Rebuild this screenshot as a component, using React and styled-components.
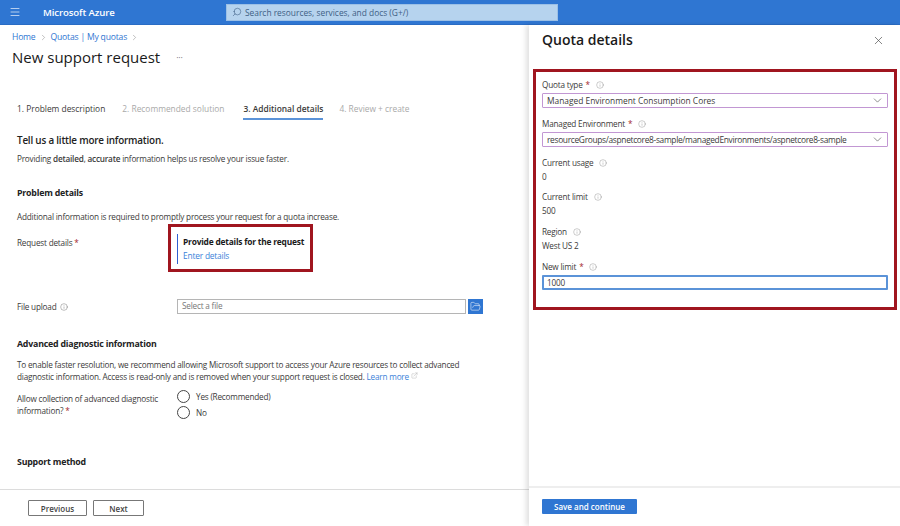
import React from "react";
import styled, { createGlobalStyle } from "styled-components";
import { ChevronDown, ChevronRight, Info, Menu, Search, X, ExternalLink, FolderOpen } from "lucide-react";

const GlobalStyle = createGlobalStyle`
    html, body {
        margin: 0;
        padding: 0;
        background: #fff;
    }
    body {
        font-family: "Open Sans", "Noto Sans", "Liberation Sans", sans-serif;
        font-size: 8.2px;
        letter-spacing: -0.2px;
        color: #3b3a39;
    }
`;

const App = () => {
    return (
        <>
            <GlobalStyle />
            <Page>
                <TopBar>
                    <MenuButton>
                        <Menu size={12} strokeWidth={1.3} />
                    </MenuButton>
                    <Brand>Microsoft Azure</Brand>
                    <SearchBox>
                        <Search size={10} strokeWidth={1.4} style={{ transform: "scaleX(-1)" }} />
                        <span>Search resources, services, and docs (G+/)</span>
                    </SearchBox>
                </TopBar>
                <Body>
                    <Main>
                        <Scroll>
                            <Breadcrumb>
                                <Crumb>Home</Crumb>
                                <ChevronRight size={9} strokeWidth={1.2} />
                                <Crumb>Quotas | My quotas</Crumb>
                                <ChevronRight size={9} strokeWidth={1.2} />
                            </Breadcrumb>
                            <TitleRow>
                                <Title>New support request</Title>
                                <Dots>···</Dots>
                            </TitleRow>
                            <Tabs>
                                <Tab>1. Problem description</Tab>
                                <Tab $muted>2. Recommended solution</Tab>
                                <Tab $active>3. Additional details</Tab>
                                <Tab $muted>4. Review + create</Tab>
                            </Tabs>
                            <Lead>Tell us a little more information.</Lead>
                            <LeadText>
                                Providing <b>detailed</b>, <b>accurate</b> information helps us resolve your issue faster.
                            </LeadText>
                            <SectionHead $top={22}>Problem details</SectionHead>
                            <Paragraph $top={12}>
                                Additional information is required to promptly process your request for a quota increase.
                            </Paragraph>
                            <RequestRow>
                                <RowLabel $w={151} $pad={13}>
                                    Request details <Star>*</Star>
                                </RowLabel>
                                <Highlight>
                                    <Callout>
                                        <CalloutTitle>Provide details for the request</CalloutTitle>
                                        <Link>Enter details</Link>
                                    </Callout>
                                </Highlight>
                            </RequestRow>
                            <FileRow>
                                <RowLabel>
                                    <LabelLine>
                                        File upload <Info size={8} strokeWidth={1} />
                                    </LabelLine>
                                </RowLabel>
                                <FileInput>Select a file</FileInput>
                                <FileButton>
                                    <FolderOpen size={11} strokeWidth={1.2} />
                                </FileButton>
                            </FileRow>
                            <SectionHead $top={24}>Advanced diagnostic information</SectionHead>
                            <Paragraph $top={9}>
                                To enable faster resolution, we recommend allowing Microsoft support to access your Azure resources to collect advanced
                                diagnostic information. Access is read-only and is removed when your support request is closed.{" "}
                                <Link>Learn more</Link> <ExternalLink size={7} strokeWidth={1} />
                            </Paragraph>
                            <RadioRow>
                                <RowLabel $pad={3}>
                                    Allow collection of advanced diagnostic information? <Star>*</Star>
                                </RowLabel>
                                <RadioGroup>
                                    <RadioOption>
                                        <Radio />
                                        Yes (Recommended)
                                    </RadioOption>
                                    <RadioOption>
                                        <Radio />
                                        No
                                    </RadioOption>
                                </RadioGroup>
                            </RadioRow>
                            <SectionHead $top={38}>Support method</SectionHead>
                        </Scroll>
                        <MainFooter>
                            <OutlineButton $w={59}>Previous</OutlineButton>
                            <OutlineButton $w={51}>Next</OutlineButton>
                        </MainFooter>
                    </Main>
                    <Panel>
                        <PanelHead>
                            <PanelTitle>Quota details</PanelTitle>
                            <X size={13} strokeWidth={1.2} color="#444" />
                        </PanelHead>
                        <PanelBox>
                            <Field>
                                <FieldLabel>
                                    Quota type <Star>*</Star> <Info size={8} strokeWidth={1} />
                                </FieldLabel>
                                <Select $spacing={0}>
                                    Managed Environment Consumption Cores
                                    <ChevronDown size={13} strokeWidth={1.1} />
                                </Select>
                            </Field>
                            <Field $top={10}>
                                <FieldLabel>
                                    Managed Environment <Star>*</Star> <Info size={8} strokeWidth={1} />
                                </FieldLabel>
                                <Select $spacing={-0.32}>
                                    resourceGroups/aspnetcore8-sample/managedEnvironments/aspnetcore8-sample
                                    <ChevronDown size={13} strokeWidth={1.1} />
                                </Select>
                            </Field>
                            <Field $top={10}>
                                <FieldLabel>
                                    Current usage <Info size={8} strokeWidth={1} />
                                </FieldLabel>
                                <Value>0</Value>
                            </Field>
                            <Field $top={8}>
                                <FieldLabel>
                                    Current limit <Info size={8} strokeWidth={1} />
                                </FieldLabel>
                                <Value>500</Value>
                            </Field>
                            <Field $top={9}>
                                <FieldLabel>
                                    Region <Info size={8} strokeWidth={1} />
                                </FieldLabel>
                                <Value>West US 2</Value>
                            </Field>
                            <Field $top={9}>
                                <FieldLabel>
                                    New limit <Star>*</Star> <Info size={8} strokeWidth={1} />
                                </FieldLabel>
                                <TextInput>1000</TextInput>
                            </Field>
                        </PanelBox>
                        <PanelSpacer />
                        <PanelFooter>
                            <PrimaryButton>Save and continue</PrimaryButton>
                        </PanelFooter>
                    </Panel>
                </Body>
            </Page>
        </>
    );
};

export default App;

const Page = styled.div`
    width: 900px;
    height: 526px;
    display: flex;
    flex-direction: column;
    overflow: hidden;
`;
const TopBar = styled.header`
    height: 25px;
    flex: none;
    box-sizing: border-box;
    background: #2f76d2;
    border-bottom: 1px solid #2a6cc4;
    display: flex;
    align-items: center;
    color: #fff;
`;
const MenuButton = styled.div`
    width: 29px;
    padding-left: 9px;
    box-sizing: border-box;
    display: flex;
`;
const Brand = styled.div`
    width: 189px;
    margin-left: 14px;
    font-size: 9.6px;
    font-weight: 600;
    letter-spacing: -0.1px;
`;
const SearchBox = styled.div`
    width: 332px;
    height: 17px;
    margin-left: -6px;
    box-sizing: border-box;
    padding-left: 5px;
    background: #b6d3ee;
    border: 1px solid #9cc0e6;
    color: #3e5f85;
    display: flex;
    align-items: center;
    gap: 3px;
    font-size: 8.4px;
    letter-spacing: 0;
`;
const Body = styled.div`
    flex: 1;
    display: flex;
    min-height: 0;
`;
const Main = styled.main`
    width: 529px;
    flex: none;
    display: flex;
    flex-direction: column;
`;
const Scroll = styled.div`
    flex: 1;
    padding-left: 17px;
    padding-right: 40px;
    overflow: hidden;
`;
const Breadcrumb = styled.nav`
    margin-left: -5px;
    height: 12px;
    margin-top: 6px;
    display: flex;
    align-items: center;
    gap: 3px;
    color: #777;
`;
const Crumb = styled.span`
    color: #2f76d2;
    font-size: 8.6px;
`;
const TitleRow = styled.div`
    margin-left: -5px;
    margin-top: 4px;
    display: flex;
    align-items: center;
    gap: 16px;
`;
const Title = styled.h1`
    margin: 0;
    font-size: 15px;
    line-height: 20px;
    font-weight: 500;
    letter-spacing: 0;
    color: #1a1a1a;
`;
const Dots = styled.span`
    color: #777;
    font-size: 9px;
`;
const Tabs = styled.div`
    margin-top: 33px;
    display: flex;
    gap: 17px;
`;
const Tab = styled.div`
    height: 20px;
    box-sizing: border-box;
    padding-top: 3px;
    margin: ${(props) => (props.$active ? "0 -1px 0 2px" : "0")};
    line-height: 12px;
    font-size: 8.4px;
    letter-spacing: 0;
    color: ${(props) => (props.$muted ? "#a9a9a9" : "#3b3a39")};
    font-weight: ${(props) => (props.$active ? 600 : 400)};
    border-bottom: 2px solid ${(props) => (props.$active ? "#5b93d8" : "transparent")};
`;
const Lead = styled.div`
    margin-top: 13px;
    font-size: 9.9px;
    line-height: 14px;
    font-weight: 600;
    color: #222;
`;
const LeadText = styled.div`
    margin-top: 6px;
    line-height: 12px;
    b {
        font-weight: 600;
    }
`;
const SectionHead = styled.h2`
    margin: ${(props) => props.$top}px 0 0;
    font-size: 8.8px;
    line-height: 12px;
    font-weight: 700;
    color: #222;
`;
const Paragraph = styled.p`
    margin: ${(props) => props.$top}px 0 0;
    line-height: 12px;
    svg {
        vertical-align: 1px;
        color: #888;
    }
`;
const RequestRow = styled.div`
    margin-top: 1px;
    display: flex;
    align-items: flex-start;
`;
const RowLabel = styled.div`
    width: ${(props) => props.$w || 160}px;
    flex: none;
    padding-top: ${(props) => props.$pad || 0}px;
    box-sizing: border-box;
    line-height: 12px;
`;
const LabelLine = styled.span`
    display: inline-flex;
    align-items: center;
    gap: 4px;
`;
const Star = styled.span`
    color: #a4262c;
`;
const Highlight = styled.div`
    width: 145px;
    height: 48px;
    box-sizing: border-box;
    border: 3px solid #a0151f;
    padding: 7px 6px;
`;
const Callout = styled.div`
    border-left: 1px solid #2f5fd0;
    padding: 1px 0 0 5px;
    height: 30px;
    box-sizing: border-box;
    line-height: 14px;
    font-size: 8.4px;
    white-space: nowrap;
`;
const CalloutTitle = styled.div`
    font-weight: 700;
    color: #1a1a1a;
`;
const Link = styled.a`
    color: #3b82d9;
`;
const FileRow = styled.div`
    margin-top: 27px;
    display: flex;
    align-items: center;
`;
const FileInput = styled.div`
    width: 289px;
    height: 15px;
    flex: none;
    box-sizing: border-box;
    border: 1px solid #b5b5b5;
    padding-left: 4px;
    line-height: 12px;
    color: #777;
`;
const FileButton = styled.div`
    width: 15px;
    height: 15px;
    margin-left: 2px;
    background: #2f76d2;
    color: #fff;
    display: flex;
    align-items: center;
    justify-content: center;
    flex: none;
`;
const RadioRow = styled.div`
    margin-top: 7px;
    display: flex;
`;
const RadioGroup = styled.div`
    display: flex;
    flex-direction: column;
    gap: 4px;
`;
const RadioOption = styled.label`
    display: flex;
    align-items: center;
    gap: 6px;
    height: 12px;
`;
const Radio = styled.span`
    width: 11px;
    height: 11px;
    border: 1px solid #444;
    border-radius: 50%;
    flex: none;
`;
const MainFooter = styled.footer`
    height: 37px;
    flex: none;
    box-sizing: border-box;
    border-top: 1px solid #dcdcdc;
    padding: 10px 0 0 28px;
    display: flex;
    gap: 6px;
    align-items: flex-start;
`;
const OutlineButton = styled.button`
    width: ${(props) => props.$w}px;
    height: 16px;
    padding: 0;
    background: #fff;
    border: 1px solid #777;
    border-radius: 1px;
    font: 600 8px "Open Sans", sans-serif;
    color: #444;
`;
const Panel = styled.aside`
    width: 371px;
    flex: none;
    display: flex;
    flex-direction: column;
    background: #fff;
    box-shadow: -3px 0 5px rgba(0, 0, 0, 0.12);
    position: relative;
`;
const PanelHead = styled.div`
    height: 44px;
    box-sizing: border-box;
    padding: 5px 15px 0 13px;
    display: flex;
    align-items: flex-start;
    justify-content: space-between;
    flex: none;
    svg {
        margin-top: 4px;
    }
`;
const PanelTitle = styled.h2`
    margin: 0;
    font-size: 14px;
    line-height: 20px;
    font-weight: 600;
    letter-spacing: 0;
    color: #1a1a1a;
`;
const PanelBox = styled.div`
    width: 364px;
    height: 241px;
    margin-left: 4px;
    box-sizing: border-box;
    border: 3px solid #a0151f;
    padding: 7px 6px 0;
    flex: none;
`;
const Field = styled.div`
    margin-top: ${(props) => props.$top || 0}px;
`;
const FieldLabel = styled.div`
    height: 12px;
    line-height: 12px;
    margin-bottom: 1px;
    display: flex;
    align-items: center;
    gap: 3px;
    svg {
        margin-left: 3px;
        color: #666;
    }
`;
const Select = styled.div`
    height: 15px;
    margin-top: 2px;
    box-sizing: border-box;
    border: 1px solid #c297d3;
    border-radius: 1px;
    padding: 0 3px 0 4px;
    display: flex;
    align-items: center;
    justify-content: space-between;
    line-height: 12px;
    font-size: 8.4px;
    letter-spacing: ${(props) => props.$spacing}px;
    white-space: nowrap;
    svg {
        color: #444;
        flex: none;
    }
`;
const Value = styled.div`
    line-height: 13px;
`;
const TextInput = styled.div`
    height: 15px;
    margin-top: 2px;
    box-sizing: border-box;
    border: 2px solid #5b93d8;
    border-radius: 1px;
    padding-left: 3px;
    line-height: 11px;
`;
const PanelSpacer = styled.div`
    flex: 1;
`;
const PanelFooter = styled.div`
    height: 40px;
    flex: none;
    box-sizing: border-box;
    border-top: 2px solid #eee;
    padding: 11px 0 0 13px;
`;
const PrimaryButton = styled.button`
    width: 95px;
    height: 15px;
    padding: 0;
    border: none;
    border-radius: 1px;
    background: #2f76d2;
    color: #fff;
    font: 600 8px "Open Sans", sans-serif;
`;
